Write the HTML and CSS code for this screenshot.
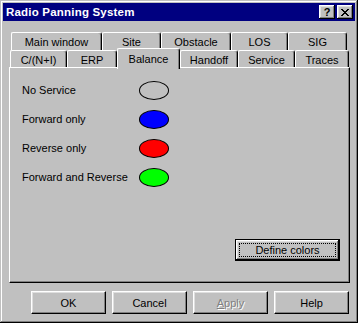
FILE: index.html
```html
<!DOCTYPE html>
<html lang="en">
<head>
  <meta charset="UTF-8" />
  <title>Radio Panning System</title>
  <link rel="stylesheet" href="styles.css">
</head>
<body>
  <div class="window">
    <div class="titlebar">
      <span class="title">Radio Panning System</span>
      <div class="caption-buttons">
        <button class="caption-btn help-btn">?</button>
        <button class="caption-btn close-btn">
          <svg width="8" height="7" viewBox="0 0 8 7">
            <path d="M0 0h2v1h1v1h2v-1h1v-1h2v1h-1v1h-1v1h-1v1h1v1h1v1h1v1h-2v-1h-1v-1h-2v1h-1v1h-2v-1h1v-1h1v-1h1v-1h-1v-1h-1v-1h-1z" fill="#000"/>
          </svg>
        </button>
      </div>
    </div>

    <div class="tabs">
      <div class="tab-row back">
        <div class="tab w-main">Main window</div>
        <div class="tab w-site">Site</div>
        <div class="tab w-obstacle">Obstacle</div>
        <div class="tab w-los">LOS</div>
        <div class="tab w-sig">SIG</div>
      </div>
      <div class="tab-row front">
        <div class="tab w-cni">C/(N+I)</div>
        <div class="tab w-erp">ERP</div>
        <div class="tab w-balance selected">Balance</div>
        <div class="tab w-handoff">Handoff</div>
        <div class="tab w-service">Service</div>
        <div class="tab w-traces">Traces</div>
      </div>
    </div>

    <div class="panel">
      <div class="legend">
        <span class="legend-label">No Service</span>
        <span class="swatch none"></span>
        <span class="legend-label">Forward only</span>
        <span class="swatch forward"></span>
        <span class="legend-label">Reverse only</span>
        <span class="swatch reverse"></span>
        <span class="legend-label">Forward and Reverse</span>
        <span class="swatch both"></span>
      </div>
      <button class="btn default-btn">Define colors</button>
    </div>

    <div class="actions">
      <button class="btn">OK</button>
      <button class="btn">Cancel</button>
      <button class="btn disabled"><u>A</u>pply</button>
      <button class="btn">Help</button>
    </div>
  </div>
</body>
</html>
```

FILE: styles.css
```css
body {
  margin: 0;
  font-family: "Liberation Sans", Arial, sans-serif;
  font-size: 11px;
  color: #000;
  background: #c0c0c0;
}

.window {
  width: 358px;
  height: 323px;
  box-sizing: border-box;
  padding: 3px;
  background: #c0c0c0;
  box-shadow: inset -1px -1px #000, inset 1px 1px #c0c0c0,
              inset -2px -2px #808080, inset 2px 2px #fff;
}

.titlebar {
  height: 18px;
  background: #000080;
  display: flex;
  align-items: center;
  justify-content: space-between;
  padding: 0 2px 0 3px;
}

.title {
  color: #fff;
  font-weight: bold;
  font-size: 11.5px;
  letter-spacing: 0.2px;
}

.caption-buttons {
  display: flex;
  gap: 2px;
}

.caption-btn {
  width: 16px;
  height: 14px;
  padding: 0;
  border: none;
  background: #c0c0c0;
  box-shadow: inset -1px -1px #000, inset 1px 1px #fff,
              inset -2px -2px #808080, inset 2px 2px #dfdfdf;
  display: flex;
  align-items: center;
  justify-content: center;
  font-family: "Liberation Sans", Arial, sans-serif;
  font-weight: bold;
  font-size: 11px;
  line-height: 1;
  color: #000;
}

.tabs {
  margin-top: 11px;
}

.tab-row {
  display: flex;
  height: 18px;
}

.tab-row.back {
  padding-left: 8px;
}

.tab-row.front {
  padding-left: 7px;
  height: 17px;
}

.tab {
  box-sizing: border-box;
  height: 18px;
  display: flex;
  align-items: center;
  justify-content: center;
  background: #c0c0c0;
  border-top: 1px solid #fff;
  border-left: 1px solid #fff;
  border-right: 1px solid #000;
  border-radius: 2px 3px 0 0;
  box-shadow: inset -1px 0 #808080;
  padding-top: 1px;
}

.front .tab {
  height: 17px;
}

.front .tab.selected {
  position: relative;
  z-index: 1;
  height: 21px;
  margin-top: -2px;
  padding-bottom: 2px;
}

.w-main { width: 91px; }
.w-site { width: 59px; }
.w-obstacle { width: 70px; }
.w-los { width: 57px; }
.w-sig { width: 59px; }

.w-cni { width: 57px; }
.w-erp { width: 50px; }
.w-balance { width: 63px; }
.w-handoff { width: 58px; }
.w-service { width: 57px; }
.w-traces { width: 54px; }

.panel {
  box-sizing: border-box;
  margin-left: 6px;
  width: 341px;
  height: 216px;
  border-top: 1px solid #fff;
  border-left: 1px solid #fff;
  border-right: 1px solid #000;
  border-bottom: 1px solid #000;
  box-shadow: inset -1px -1px #808080;
  padding: 13px 9px 21px 12px;
  display: flex;
  flex-direction: column;
}

.legend {
  display: grid;
  grid-template-columns: 117px 30px;
  grid-auto-rows: 19px;
  row-gap: 10px;
  align-items: center;
}

.legend-label {
  margin-top: -2px;
}

.swatch {
  box-sizing: border-box;
  width: 30px;
  height: 19px;
  border: 1px solid #000;
  border-radius: 50%;
}

.swatch.none { background: #c0c0c0; }
.swatch.forward { background: #0000ff; }
.swatch.reverse { background: #ff0000; }
.swatch.both { background: #00ff00; }

.btn {
  box-sizing: border-box;
  width: 75px;
  height: 23px;
  padding: 0;
  background: #c0c0c0;
  border: 1px solid;
  border-color: #fff #000 #000 #fff;
  box-shadow: inset -1px -1px #808080, inset 1px 1px #dfdfdf;
  font-family: "Liberation Sans", Arial, sans-serif;
  font-size: 11px;
  color: #000;
}

.default-btn {
  margin-top: auto;
  align-self: flex-end;
  width: 105px;
  height: 22px;
  border: 1px solid #000;
  box-shadow: inset -1px -1px #000, inset 1px 1px #fff,
              inset -2px -2px #808080, inset 2px 2px #dfdfdf;
  outline: 1px dotted #000;
  outline-offset: -5px;
}

.btn.disabled {
  color: #808080;
  text-shadow: 1px 1px #fff;
}

.actions {
  display: flex;
  justify-content: flex-end;
  gap: 6px;
  margin-top: 8px;
  padding-right: 6px;
}
```
